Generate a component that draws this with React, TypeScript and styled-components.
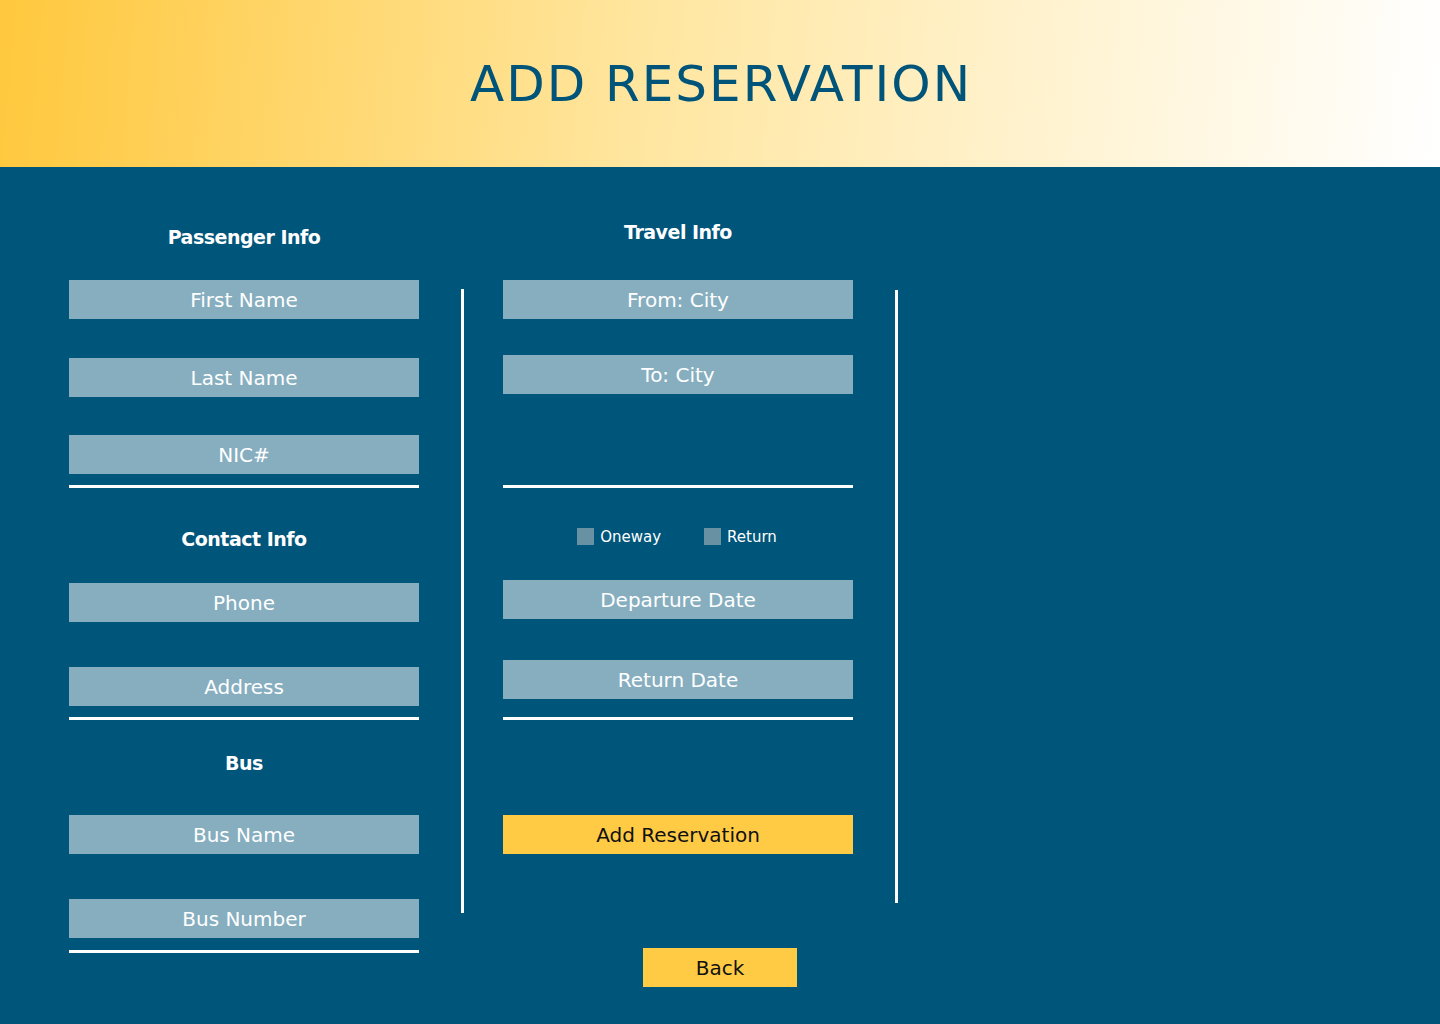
import React from 'react';
import styled, { createGlobalStyle } from 'styled-components';

const GlobalStyle = createGlobalStyle`
  html, body {
    margin: 0;
    padding: 0;
    background: #00557a;
  }
  body {
    font-family: 'DejaVu Sans', 'Liberation Sans', sans-serif;
  }
  * {
    box-sizing: border-box;
  }
`;

const Header = styled.header`
  height: 167px;
  display: flex;
  align-items: center;
  justify-content: center;
  background: linear-gradient(95deg, #ffc83d 0%, #ffe6a0 45%, #ffffff 100%);
`;

const Title = styled.h1`
  margin: 0 0 0 2px;
  font-size: 50px;
  font-weight: 400;
  letter-spacing: 2px;
  color: #005479;
  line-height: 1;
`;

const Main = styled.main`
  min-height: calc(100vh - 167px);
  background: #00557a;
  padding-left: 69px;
  padding-bottom: 37px;
`;

const Columns = styled.div`
  display: flex;
  align-items: flex-start;
`;

const Column = styled.section<{ $ml?: number }>`
  width: 350px;
  margin-left: ${p => p.$ml ?? 0}px;
  display: flex;
  flex-direction: column;
`;

const Divider = styled.div<{ $top: number; $height: number; $left: number }>`
  width: 3px;
  flex-shrink: 0;
  background: #ffffff;
  margin-top: ${p => p.$top}px;
  margin-left: ${p => p.$left}px;
  height: ${p => p.$height}px;
`;

const Heading = styled.h2<{ $mt: number }>`
  margin: ${p => p.$mt}px 0 0;
  height: 30px;
  line-height: 30px;
  text-align: center;
  color: #ffffff;
  font-size: 19px;
  font-weight: 700;
  letter-spacing: -0.5px;
`;

const Field = styled.input<{ $mt: number }>`
  display: block;
  width: 100%;
  height: 39px;
  margin-top: ${p => p.$mt}px;
  border: none;
  outline: none;
  background: #86aebf;
  color: #ffffff;
  font-family: inherit;
  font-size: 20px;
  text-align: center;
  padding: 0;

  &::placeholder {
    color: #ffffff;
    opacity: 1;
  }
`;

const Rule = styled.hr<{ $mt: number }>`
  margin: ${p => p.$mt}px 0 0;
  border: none;
  height: 3px;
  background: #ffffff;
`;

const Options = styled.div<{ $mt: number }>`
  margin-top: ${p => p.$mt}px;
  height: 17px;
  display: flex;
  justify-content: center;
  gap: 43px;
  padding-right: 2px;
`;

const Option = styled.label`
  display: flex;
  align-items: center;
  gap: 6px;
  color: #ffffff;
  font-size: 15px;
  cursor: pointer;
`;

const Box = styled.input`
  appearance: none;
  margin: 0;
  width: 17px;
  height: 17px;
  background: #6891a3;
  border: none;
`;

const Button = styled.button<{ $mt: number; $width?: number }>`
  display: block;
  width: ${p => (p.$width ? `${p.$width}px` : '100%')};
  height: 39px;
  margin-top: ${p => p.$mt}px;
  border: none;
  background: #ffcb45;
  color: #111111;
  font-family: inherit;
  font-size: 20px;
  padding: 0;
  cursor: pointer;
`;

const BackRow = styled.div`
  display: flex;
  justify-content: center;
  margin-left: -69px;
  margin-top: -5px;
`;

export default function App() {
  return (
    <>
      <GlobalStyle />
      <Header>
        <Title>ADD RESERVATION</Title>
      </Header>
      <Main>
        <Columns>
          <Column>
            <Heading $mt={55}>Passenger Info</Heading>
            <Field $mt={28} placeholder="First Name" />
            <Field $mt={39} placeholder="Last Name" />
            <Field $mt={38} placeholder="NIC#" />
            <Rule $mt={11} />
            <Heading $mt={36}>Contact Info</Heading>
            <Field $mt={29} placeholder="Phone" />
            <Field $mt={45} placeholder="Address" />
            <Rule $mt={11} />
            <Heading $mt={28}>Bus</Heading>
            <Field $mt={37} placeholder="Bus Name" />
            <Field $mt={45} placeholder="Bus Number" />
            <Rule $mt={12} />
          </Column>
          <Divider $left={42} $top={122} $height={624} />
          <Column $ml={39}>
            <Heading $mt={50}>Travel Info</Heading>
            <Field $mt={33} placeholder="From: City" />
            <Field $mt={36} placeholder="To: City" />
            <Rule $mt={91} />
            <Options $mt={40}>
              <Option>
                <Box type="checkbox" />
                Oneway
              </Option>
              <Option>
                <Box type="checkbox" />
                Return
              </Option>
            </Options>
            <Field $mt={35} placeholder="Departure Date" />
            <Field $mt={41} placeholder="Return Date" />
            <Rule $mt={18} />
            <Button $mt={95}>Add Reservation</Button>
          </Column>
          <Divider $left={42} $top={123} $height={613} />
        </Columns>
        <BackRow>
          <Button $mt={0} $width={154}>Back</Button>
        </BackRow>
      </Main>
    </>
  );
}
